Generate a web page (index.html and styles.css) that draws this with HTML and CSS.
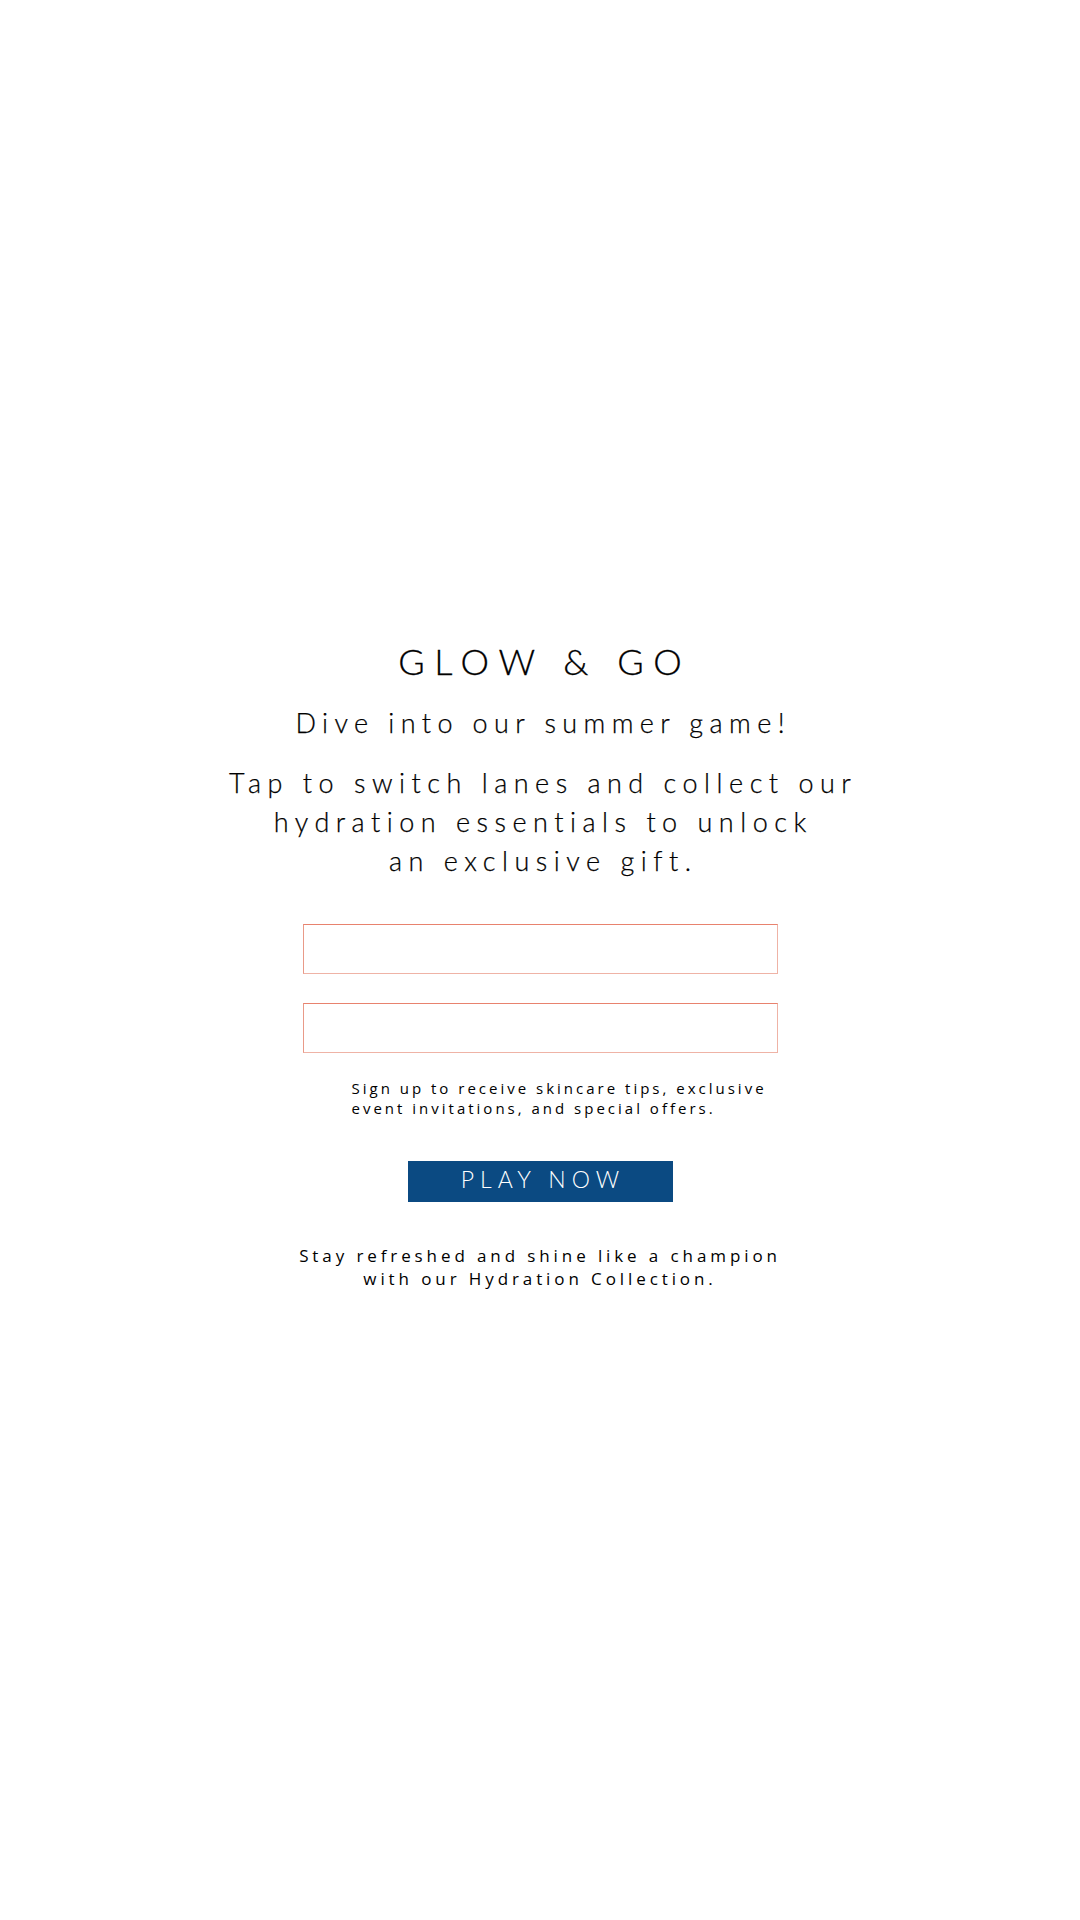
FILE: index.html
```html
<!DOCTYPE html>
<html lang="en">
<head>
<meta charset="utf-8">
<title>Glow &amp; Go</title>
<link rel="stylesheet" href="styles.css">
</head>
<body>
<main class="page">
  <h1 class="title">GLOW &amp; GO</h1>
  <p class="subtitle">Dive into our summer game!</p>
  <p class="lead">Tap to switch lanes and collect our<br>hydration essentials to unlock<br>an exclusive gift.</p>
  <form class="form">
    <input class="field" type="text" aria-label="Name">
    <input class="field" type="email" aria-label="Email">
    <p class="note">Sign up to receive skincare tips, exclusive<br>event invitations, and special offers.</p>
    <button class="play" type="button">PLAY NOW</button>
  </form>
  <p class="footer">Stay refreshed and shine like a champion<br>with our Hydration Collection.</p>
</main>
</body>
</html>
```

FILE: styles.css
```css
html, body {
  margin: 0;
  padding: 0;
  background: #ffffff;
}
body {
  width: 1080px;
  height: 1920px;
  overflow: hidden;
  color: #000000;
}
.page {
  display: flex;
  flex-direction: column;
  align-items: center;
  padding-top: 639px;
}
.title {
  margin: 0;
  font-family: "Lato", "Open Sans", sans-serif;
  font-weight: 300;
  font-size: 36px;
  line-height: 44px;
  letter-spacing: 9.6px;
  padding-left: 9.6px;
  text-align: center;
  -webkit-text-stroke: 0.3px #000;
}
.subtitle {
  margin: 22px 0 0;
  font-family: "Lato", "Open Sans", sans-serif;
  font-weight: 300;
  font-size: 27px;
  line-height: 36px;
  letter-spacing: 6.4px;
  padding-left: 6.4px;
  text-align: center;
  -webkit-text-stroke: 0.25px #000;
}
.lead {
  margin: 22px 0 0;
  font-family: "Lato", "Open Sans", sans-serif;
  font-weight: 300;
  font-size: 27px;
  line-height: 39px;
  letter-spacing: 6.5px;
  padding-left: 6.5px;
  text-align: center;
  -webkit-text-stroke: 0.25px #000;
}
.form {
  margin-top: 44px;
  width: 475px;
  display: flex;
  flex-direction: column;
  align-items: stretch;
}
.field {
  box-sizing: border-box;
  height: 50px;
  margin: 0 0 29px;
  border: 1px solid #efb3a6;
  border-top-color: #e8826e;
  border-left-color: #e99a88;
  background: #ffffff;
  outline: none;
  padding: 0 12px;
}
.field:last-of-type {
  margin-bottom: 0;
}
.note {
  margin: 25px 0 0 49px;
  font-family: "Open Sans", "Noto Sans", sans-serif;
  font-size: 15px;
  line-height: 20px;
  letter-spacing: 3px;
  text-align: left;
  white-space: nowrap;
}
.play {
  align-self: center;
  margin-top: 43px;
  width: 265px;
  height: 41px;
  border: 0;
  background: #0b4a82;
  color: #ffffff;
  font-family: "Lato", "Open Sans", sans-serif;
  font-weight: 300;
  font-size: 23px;
  line-height: 23px;
  letter-spacing: 6px;
  padding: 0 0 5px 6px;
  cursor: pointer;
}
.footer {
  margin: 42px 0 0;
  font-family: "Open Sans", "Noto Sans", sans-serif;
  font-size: 17px;
  line-height: 23px;
  letter-spacing: 3.9px;
  text-align: center;
  white-space: nowrap;
}
```
